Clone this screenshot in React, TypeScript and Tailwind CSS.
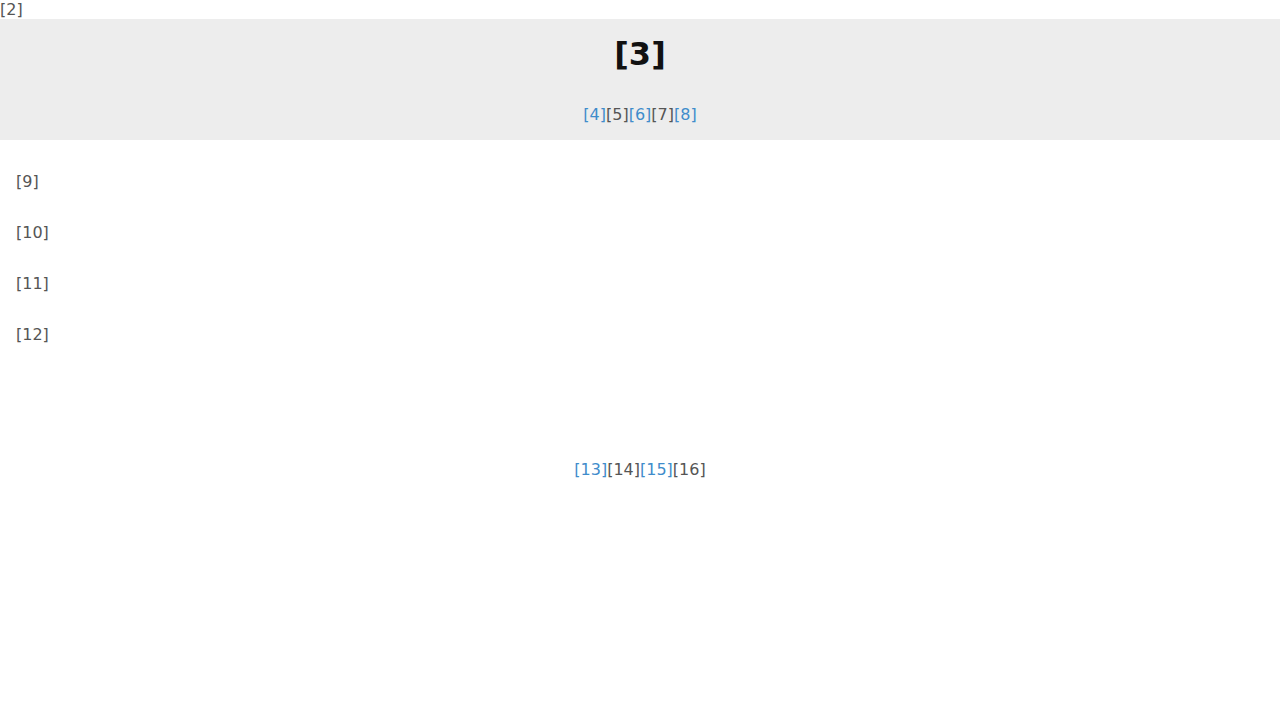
import React from "react";

export default function App() {
  const font = { fontFamily: '"DejaVu Sans", sans-serif' };
  return (
    <div style={font} className="min-h-[720px] bg-white text-[16px] leading-[19px] text-[#555]">
      <div className="h-[19px]">[2]</div>
      <header className="bg-[#ededed] pt-[17px] pb-[16px] text-center">
        <h1 className="text-[32px] font-bold leading-[37px] text-[#111]">[3]</h1>
        <nav className="mt-[32px] leading-[19px]">
          <a className="text-[#3f8ccb]">[4]</a>
          <span>[5]</span>
          <a className="text-[#3f8ccb]">[6]</a>
          <span>[7]</span>
          <a className="text-[#3f8ccb]">[8]</a>
        </nav>
      </header>
      <main className="flex flex-col gap-[32px] px-[16px] pt-[32px]">
        <p>[9]</p>
        <p>[10]</p>
        <p>[11]</p>
        <p>[12]</p>
      </main>
      <footer className="mt-[116px] text-center">
        <a className="text-[#3f8ccb]">[13]</a>
        <span>[14]</span>
        <a className="text-[#3f8ccb]">[15]</a>
        <span>[16]</span>
      </footer>
    </div>
  );
}
